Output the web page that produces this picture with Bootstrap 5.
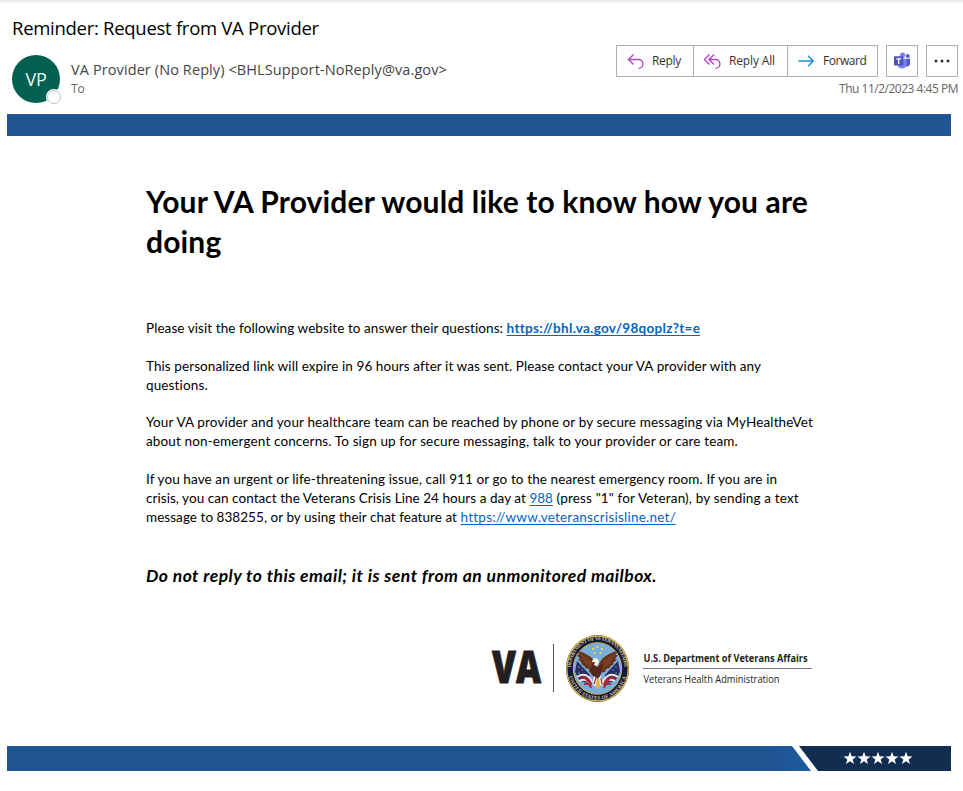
<!DOCTYPE html>
<html lang="en">
<head>
<meta charset="utf-8">
<meta name="viewport" content="width=device-width, initial-scale=1">
<title>Reminder: Request from VA Provider</title>
<link href="https://cdn.jsdelivr.net/npm/bootstrap@5.3.0/dist/css/bootstrap.min.css" rel="stylesheet">
<style>
  body { font-family: "Open Sans", "Noto Sans", sans-serif; color: #000; background: #fff; }
  .mail-window { height: 791px; overflow: hidden; }
  .top-shade { height: 4px; background: linear-gradient(#e4e4e4, #fff); }
  .mail-head { height: 110px; padding: 11px 5px 0 12px; }
  .subject { font-size: 18.5px; line-height: 26px; letter-spacing: -.28px; margin: 0; font-weight: 400; }
  .avatar { width: 48px; height: 48px; margin-top: 14px; background: #035f50; color: #e8f5f1; font-size: 18px; letter-spacing: -.4px; }
  .presence { width: 14px; height: 14px; right: -1px; bottom: -1px; border: 1px solid #b0c4cc; box-shadow: 0 0 0 1px #fff; background: #fff; }
  .sender-block { padding-left: 11px; }
  .sender { font-size: 14.5px; line-height: 20px; letter-spacing: .1px; color: #444; margin-top: 19px; }
  .to-line { font-size: 12px; line-height: 16px; color: #666; margin-top: 1px; }
  .actions { margin-top: 4px; }
  .mail-btn { height: 32px; padding: 0; border: 1px solid #b3b0ad; border-radius: 0; background: #fff; color: #333; font-size: 12px; line-height: 30px; }
  .mail-btn .glyph { margin: 0 7px 0 8px; }
  .w-reply { width: 78px; letter-spacing: -.3px; }
  .w-all { width: 95px; letter-spacing: -.15px; }
  .w-forward { width: 91px; letter-spacing: -.45px; }
  .w-square { width: 32px; }
  .stamp { font-size: 12px; line-height: 16px; letter-spacing: -.49px; color: #666; margin-top: 4px; }
  .band { height: 22px; margin: 0 12px 0 7px; background: #205493; }
  .letter { font-family: Lato, sans-serif; padding-left: 146px; height: 610px; font-size: 13.5px; line-height: 19px; }
  .letter h1 { font-size: 30px; line-height: 40px; font-weight: 700; margin: 0 0 58px; padding-top: 45px; letter-spacing: .147px; }
  .letter p { margin: 0 0 18.7px; white-space: nowrap; }
  .letter a { color: #0563c1; text-underline-offset: 2px; }
  .letter .notice { font-size: 17.5px; line-height: 24px; font-weight: 700; font-style: italic; letter-spacing: .46px; margin: 37px 0 0; }
  .s4 { letter-spacing: .05px; } .s8 { letter-spacing: .08px; } .s11 { letter-spacing: .11px; }
  .s13 { letter-spacing: .135px; } .s16 { letter-spacing: .164px; } .s23 { letter-spacing: .23px; } .s30 { letter-spacing: .303px; }
  .signature { margin: 40px 0 0 342px; overflow: visible; }
  .foot-band { height: 25px; margin: 0 12px 0 7px; }
</style>
<script src="https://cdn.jsdelivr.net/npm/bootstrap@5.3.0/dist/js/bootstrap.bundle.min.js"></script>
</head>
<body>
<div class="mail-window">
  <div class="top-shade"></div>
  <header class="mail-head">
    <h2 class="subject">Reminder: Request from VA Provider</h2>
    <div class="d-flex">
      <div class="avatar rounded-circle position-relative d-flex align-items-center justify-content-center flex-shrink-0">VP<span class="presence rounded-circle position-absolute"></span></div>
      <div class="sender-block flex-grow-1 text-nowrap">
        <div class="sender">VA Provider (No Reply) &lt;BHLSupport-NoReply@va.gov&gt;</div>
        <div class="to-line">To</div>
      </div>
      <div class="actions">
        <div class="d-flex gap-2">
          <div class="btn-group">
            <button class="btn mail-btn w-reply d-flex align-items-center"><svg class="glyph" width="20" height="18" viewBox="0 0 20 18" fill="none" stroke="#b146c2" stroke-width="1.4"><path d="M8.500 2.500 3.500 7.500l5 5M3.500 7.500H13.500a4.400 4.400 0 0 1 0 8.800"/></svg>Reply</button>
            <button class="btn mail-btn w-all d-flex align-items-center"><svg class="glyph" width="20" height="18" viewBox="0 0 20 18" fill="none" stroke="#b146c2" stroke-width="1.4"><path d="M7.500 2.500 2.500 7.500l5 5M12 2.500 7 7.500l5 5M7 7.500h6.500a4.400 4.400 0 0 1 0 8.800"/></svg>Reply All</button>
            <button class="btn mail-btn w-forward d-flex align-items-center"><svg class="glyph" width="20" height="18" viewBox="0 0 20 18" fill="none" stroke="#1e8bcd" stroke-width="1.4"><path d="M2.500 9H17.500M12 3.700 17.300 9 12 14.300"/></svg>Forward</button>
          </div>
          <button class="btn mail-btn w-square d-flex align-items-center justify-content-center" aria-label="Share to Teams"><svg width="18" height="18" viewBox="0 0 18 18"><circle cx="14.8" cy="4" r="1.9" fill="#5059c9"/><circle cx="9.7" cy="3.2" r="2.6" fill="#7b83eb"/><path d="M12.500 6.700H17v5.100a2.900 2.900 0 0 1-4.500 2.300z" fill="#5059c9"/><path d="M5 6.700h8.700v5.600a4.600 4.600 0 0 1-9 1z" fill="#7b83eb"/><rect x="1" y="4.3" width="9.3" height="9.3" rx=".8" fill="#4b53bc"/><path d="M3.300 6.900h4.800M5.700 6.900v5" stroke="#fff" stroke-width="1.3"/></svg></button>
          <button class="btn mail-btn w-square d-flex align-items-center justify-content-center" aria-label="More"><svg width="18" height="6" viewBox="0 0 18 6" fill="#333"><circle cx="3" cy="3" r="1.5"/><circle cx="9" cy="3" r="1.5"/><circle cx="15" cy="3" r="1.5"/></svg></button>
        </div>
        <div class="stamp text-end">Thu 11/2/2023 4:45 PM</div>
      </div>
    </div>
  </header>
  <div class="band"></div>

  <main class="letter">
    <h1>Your VA Provider would like to know how you are<br>doing</h1>
    <p><span class="s8">Please visit the following website to answer their questions: </span><a class="fw-bold s30" href="#">https://bhl.va.gov/98qoplz?t=e</a></p>
    <p><span class="s8">This personalized link will expire in 96 hours after it was sent. Please contact your VA provider with any</span><br><span class="s13">questions.</span></p>
    <p class="s13">Your VA provider and your healthcare team can be reached by phone or by secure messaging via MyHealtheVet<br>about non-emergent concerns. To sign up for secure messaging, talk to your provider or care team.</p>
    <p><span class="s11">If you have an urgent or life-threatening issue, call 911 or go to the nearest emergency room. If you are in</span><br><span class="s4">crisis, you can contact the Veterans Crisis Line 24 hours a day at </span><a href="#">988</a><span class="s16"> (press "1" for Veteran), by sending a text</span><br><span class="s4">message to 838255, or by using their chat feature at </span><a class="s23" href="#">https://www.veteranscrisisline.net/</a></p>
    <p class="notice">Do not reply to this email; it is sent from an unmonitored mailbox.</p>
    <svg class="signature d-block" width="345" height="80" viewBox="488 628 345 80">
      <defs>
        <path id="arcTop" d="M570.7 668.5a26.8 28.6 0 0 1 53.6 0"/>
        <path id="arcBottom" d="M567.9 668.5a29.6 31.2 0 0 0 59.2 0"/>
        <g id="wing">
          <path fill="#67331b" d="M596 664c-3-7-10-11-18-13l1 4-2 0 3 4-2 .5 4 3.500-1 1 4 2.500 0 1.500 4 1 1 3 6 1z"/>
          <path fill="none" stroke="#a3633d" stroke-width=".6" d="m580 654 12 9m-10-5 9 7m-6-3 7 6"/>
        </g>
      </defs>
      <text x="492" y="683" font-family="Open Sans, sans-serif" font-weight="800" font-size="45" fill="#231f20" stroke="#231f20" stroke-width=".9" textLength="49" lengthAdjust="spacingAndGlyphs">VA</text>
      <path d="M553.500 644v48" stroke="#555"/>
      <ellipse cx="597.500" cy="668.500" rx="31.500" ry="33.400" fill="#10183c"/>
      <ellipse cx="597.500" cy="668.500" rx="30.700" ry="32.500" fill="none" stroke="#d9b34c" stroke-width="1.300"/>
      <ellipse cx="597.500" cy="668.500" rx="24.200" ry="25.800" fill="#79aedb" stroke="#d9b34c"/>
      <g font-family="Liberation Serif, serif" font-weight="700" font-size="5.200" fill="#d8c48a">
        <text><textPath href="#arcTop" startOffset="1" textLength="84">DEPARTMENT OF VETERANS AFFAIRS</textPath></text>
        <text><textPath href="#arcBottom" startOffset="8" textLength="79">UNITED STATES OF AMERICA</textPath></text>
      </g>
      <g fill="#f4dd58"><circle cx="597.500" cy="647" r="1.100"/><circle cx="593" cy="649" r="1.100"/><circle cx="602" cy="649" r="1.100"/><circle cx="594.500" cy="653" r="1.100"/><circle cx="600.500" cy="653" r="1.100"/></g>
      <path fill="#262d60" d="m577 661 13 14-2 8-8-2-5-9zM618 661l-13 14 2 8 8-2 5-9z"/>
      <g fill="none" stroke-width="2"><path stroke="#f2e5e5" d="M577 677c6-4 11-3 15 5m26-5c-6-4-11-3-15 5m-24-1c6-3 9-1 12 5m24-5c-6-3-9-1-12 5"/><path stroke="#a42b3c" d="M579 679c5-3 9-2 12 5m25-5c-5-3-9-2-12 5m-20 0c4-1 6 0 7 4m20-4c-4-1-6 0-7 4M584 677l8 8m19-8-8 8"/></g>
      <g fill="#e8e8f5"><circle cx="579" cy="667" r=".6"/><circle cx="582" cy="670" r=".6"/><circle cx="579" cy="673" r=".6"/><circle cx="616" cy="667" r=".6"/><circle cx="613" cy="670" r=".6"/><circle cx="616" cy="673" r=".6"/></g>
      <use href="#wing"/><use href="#wing" transform="matrix(-1 0 0 1 1195 0)"/>
      <path fill="#54291a" d="m593 664 3 3 2-1 4-2-1 10-3 5-5-3-4-5z"/>
      <path fill="#f5f0e5" d="M593 659c3-2 6 0 6 3l-2 4-3-1 1-3-3 0z"/>
      <path fill="#eee8e2" d="m594 676 3 3 4-3 3 7-6 5-6-4z"/>
      <path fill="none" stroke="#a42b3c" stroke-width="1.200" d="m596 678-2 6m7-6 1 6"/>
      <path fill="#e2b13c" d="m597 679 2 0 1 7-2 4-2-4z"/>
      <g font-family="Open Sans, sans-serif" font-size="10.500" fill="#231f20">
        <text x="643.500" y="661.500" font-weight="700" textLength="164" lengthAdjust="spacingAndGlyphs">U.S. Department of Veterans Affairs</text>
        <text x="643.500" y="682.500" textLength="136" lengthAdjust="spacingAndGlyphs">Veterans Health Administration</text>
      </g>
      <path d="M643 668.500h169" stroke="#777"/>
    </svg>
  </main>

  <footer class="foot-band">
    <svg class="d-block w-100 h-100" viewBox="0 0 944 25">
      <defs>
        <linearGradient id="bandBlue"><stop offset=".95" stop-color="#205493"/><stop offset="1" stop-color="#1b5c9e"/></linearGradient>
        <path id="star" fill="#fff" d="m0-6.800 1.650 4.600 4.900.1-3.900 3 1.400 4.700L0 2.800l-4.050 2.800 1.400-4.700-3.900-3 4.900-.1z"/>
      </defs>
      <path fill="url(#bandBlue)" d="M0 0h785l19 25H0z"/>
      <path fill="#112e51" d="M792 0h152v25H811z"/>
      <use href="#star" x="843" y="12.500"/><use href="#star" x="857" y="12.500"/><use href="#star" x="871" y="12.500"/><use href="#star" x="885" y="12.500"/><use href="#star" x="899" y="12.500"/>
    </svg>
  </footer>
</div>
</body>
</html>
